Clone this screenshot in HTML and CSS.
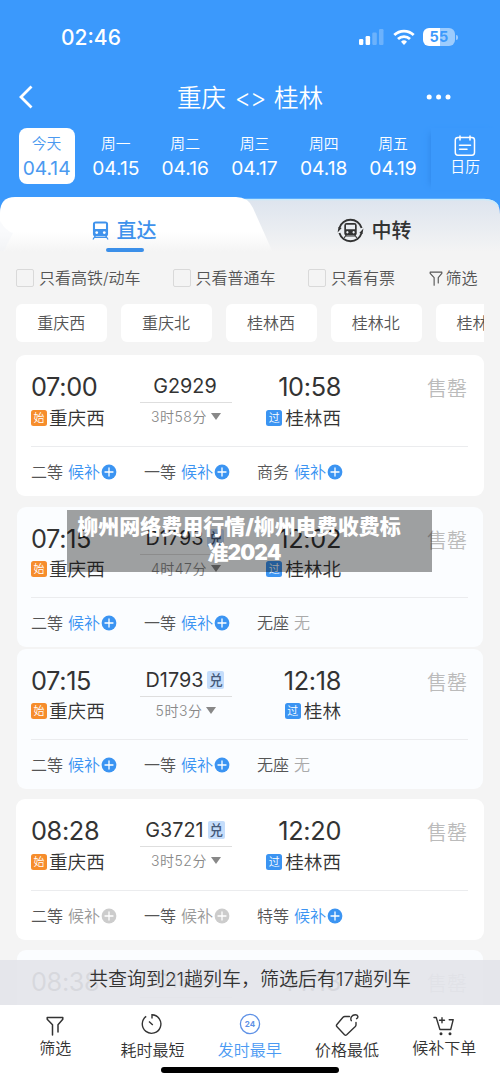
FILE: index.html
```html
<!DOCTYPE html>
<html lang="zh-CN">
<head>
<meta charset="utf-8">
<title>重庆 - 桂林</title>
<link rel="stylesheet" href="styles.css">
</head>
<body>
<svg class="defs" width="0" height="0">
  <symbol id="plus" viewBox="0 0 16 16"><circle cx="8" cy="8" r="7.4" fill="currentColor"/><path d="M8 4v8M4 8h8" stroke="#fff" stroke-width="1.3" stroke-linecap="round"/></symbol>
  <symbol id="train" viewBox="0 0 18 20"><path fill-rule="evenodd" d="M4 .5h10a3 3 0 0 1 3 3V14a2 2 0 0 1-2 2H3a2 2 0 0 1-2-2V3.500a3 3 0 0 1 3-3zM3.200 2.500v5.800h11.600V2.500zM5 10.700a1.500 1.500 0 1 0 .01 0zM13 10.700a1.500 1.500 0 1 0 .01 0z" fill="currentColor"/><path d="M3.500 15.500l-2.500 4M14.500 15.500l2.500 4M3 17.200h12" stroke="currentColor" stroke-width="1.3" fill="none"/></symbol>
  <symbol id="funnel" viewBox="0 0 18 20"><path d="M1.2 1.5h15.6v1.800L12 8.800V16M1.2 1.5v1.800L6.500 8.800V19" fill="none" stroke="currentColor" stroke-width="1.5" stroke-linejoin="round" stroke-linecap="round"/></symbol>
</svg>
<div class="screen">
  <header class="header">
    <div class="status">
      <span class="clock">02:46</span>
      <svg class="signal" width="26" height="18" viewBox="0 0 26 18" fill="#fff"><rect x="1" y="11" width="4.3" height="6" rx="1.2"/><rect x="7.6" y="8" width="4.5" height="9" rx="1.2"/><g opacity=".25"><rect x="14.3" y="4.5" width="4.5" height="12.5" rx="1.2"/><rect x="21" y="1" width="4.5" height="16" rx="1.2"/></g></svg>
      <svg class="wifi" width="22" height="17" viewBox="0 0 22 17" fill="none" stroke="#fff" stroke-width="2.8"><path d="M1.3 6.1a14 14 0 0 1 19.4 0"/><path d="M5 10a8.7 8.7 0 0 1 12 0"/><path d="M11 16l-3-3.2a4.3 4.3 0 0 1 6 0z" fill="#fff" stroke="none"/></svg>
      <span class="battery"><b>5</b><b>5</b></span><i class="battery-tip"></i>
    </div>
    <div class="titlebar">
      <svg width="18" height="24" viewBox="0 0 18 24" fill="none" stroke="#fff" stroke-width="2.8"><path d="M14.5 1.5L4 12l10.5 10.5"/></svg>
      <h1>重庆 <span>&lt;&gt;</span> 桂林</h1>
      <svg width="26" height="6" viewBox="0 0 26 6" fill="#fff"><circle cx="3.2" cy="3" r="2.5"/><circle cx="12.6" cy="3" r="2.5"/><circle cx="22" cy="3" r="2.5"/></svg>
    </div>
    <div class="dates">
      <div class="date on"><span>今天</span><b>04.14</b></div>
      <div class="date"><span>周一</span><b>04.15</b></div>
      <div class="date"><span>周二</span><b>04.16</b></div>
      <div class="date"><span>周三</span><b>04.17</b></div>
      <div class="date"><span>周四</span><b>04.18</b></div>
      <div class="date"><span>周五</span><b>04.19</b></div>
      <div class="calendar">
        <svg width="22" height="22" viewBox="0 0 22 22" fill="none" stroke="#fff" stroke-width="1.5" stroke-linecap="round"><rect x="1.3" y="2.5" width="19.2" height="17.7" rx="2.6"/><path d="M6 1v4M16 1v4M5.5 10.2h11M5.5 14.2h7.5"/></svg>
        <span>日历</span>
      </div>
    </div>
  </header>

  <nav class="tabs">
    <svg class="tabs-bg" width="500" height="58" viewBox="0 0 500 58">
      <defs>
        <linearGradient id="white" x2="0" y2="1"><stop offset=".6" stop-color="#fff"/><stop offset=".95" stop-color="#f4f4f4"/></linearGradient>
        <linearGradient id="grey" x2="0" y2="1"><stop offset="0" stop-color="#dde4ee"/><stop offset=".95" stop-color="#f4f4f4"/></linearGradient>
      </defs>
      <path d="M0 58V17Q0 2 15 2H485Q500 2 500 17V58z" fill="url(#grey)"/>
      <path d="M235 2.5H484Q494 2.5 498 9" fill="none" stroke="#c8ebfc" stroke-width="1.5"/>
      <path d="M0 58V16Q0 0 15 0H236Q248 0 253 11L274 58z" fill="url(#white)"/>
      <path d="M0 24Q6 34 13 36L4 54H0z" fill="#f0f3f8" opacity=".4"/>
    </svg>
    <div class="tab active"><svg class="train" width="17" height="19"><use href="#train"/></svg><span>直达</span></div>
    <div class="tab"><svg class="transfer" width="27" height="27" viewBox="0 0 27 27"><path d="M2.400 11A11.600 11.600 0 0 1 24.600 11M24.600 16A11.600 11.600 0 0 1 2.400 16" fill="none" stroke="#333" stroke-width="1.9"/><path d="M.6 15.500L1.500 10l3.200 1zM26.400 11.500L25.500 17l-3.200-1z" fill="#333"/><svg x="6.500" y="5.500" width="14" height="16" color="#333"><use href="#train"/></svg></svg><span>中转</span></div>
  </nav>

  <div class="filters">
    <label><i></i>只看高铁/动车</label><label><i></i>只看普通车</label><label><i></i>只看有票</label>
    <span class="more"><svg width="14" height="15"><use href="#funnel"/></svg>筛选</span>
  </div>
  <div class="chips"><span>重庆西</span><span>重庆北</span><span>桂林西</span><span>桂林北</span><span>桂林</span></div>

  <main class="list">
    <article class="card">
      <div class="trip">
        <div class="from"><time>07:00</time><p><i class="tag start">始</i>重庆西</p></div>
        <div class="train-no"><b>G2929</b><hr><small>3时58分<i class="caret"></i></small></div>
        <div class="to"><time>10:58</time><p><i class="tag pass">过</i>桂林西</p></div>
        <div class="sold">售罄</div>
      </div>
      <div class="seats"><span>二等 <em>候补<svg><use href="#plus"/></svg></em></span><span>一等 <em>候补<svg><use href="#plus"/></svg></em></span><span>商务 <em>候补<svg><use href="#plus"/></svg></em></span></div>
    </article>

    <article class="card tinted second">
      <div class="trip">
        <div class="from"><time>07:15</time><p><i class="tag start">始</i>重庆西</p></div>
        <div class="train-no"><b>D1793<i class="swap">兑</i></b><hr><small>4时47分<i class="caret"></i></small></div>
        <div class="to"><time>12:02</time><p><i class="tag pass">过</i>桂林北</p></div>
        <div class="sold">售罄</div>
      </div>
      <div class="seats"><span>二等 <em>候补<svg><use href="#plus"/></svg></em></span><span>一等 <em>候补<svg><use href="#plus"/></svg></em></span><span>无座 <em class="none">无</em></span></div>
      <div class="caption"><span>柳州网络费用行情/柳州电费收费标</span><span>准2024</span></div>
    </article>

    <article class="card tinted third">
      <div class="trip">
        <div class="from"><time>07:15</time><p><i class="tag start">始</i>重庆西</p></div>
        <div class="train-no"><b>D1793<i class="swap">兑</i></b><hr><small>5时3分<i class="caret"></i></small></div>
        <div class="to"><time>12:18</time><p><i class="tag pass">过</i>桂林</p></div>
        <div class="sold">售罄</div>
      </div>
      <div class="seats"><span>二等 <em>候补<svg><use href="#plus"/></svg></em></span><span>一等 <em>候补<svg><use href="#plus"/></svg></em></span><span>无座 <em class="none">无</em></span></div>
    </article>

    <article class="card fourth">
      <div class="trip">
        <div class="from"><time>08:28</time><p><i class="tag start">始</i>重庆西</p></div>
        <div class="train-no"><b>G3721<i class="swap">兑</i></b><hr><small>3时52分<i class="caret"></i></small></div>
        <div class="to"><time>12:20</time><p><i class="tag pass">过</i>桂林西</p></div>
        <div class="sold">售罄</div>
      </div>
      <div class="seats"><span>二等 <em class="off">候补<svg><use href="#plus"/></svg></em></span><span>一等 <em class="off">候补<svg><use href="#plus"/></svg></em></span><span>特等 <em>候补<svg><use href="#plus"/></svg></em></span></div>
    </article>

    <article class="card tinted fifth">
      <div class="trip">
        <div class="from"><time>08:38</time></div>
        <div class="train-no"><b>D1823</b><hr></div>
        <div class="to"><time>14:13</time></div>
        <div class="sold">售罄</div>
      </div>
      <div class="toast">共查询到21趟列车，筛选后有17趟列车</div>
    </article>
  </main>

  <footer class="bottom">
    <div class="item edge"><svg width="18" height="20"><use href="#funnel"/></svg><span>筛选</span></div>
    <div class="item"><svg width="22" height="22" viewBox="0 0 22 22" fill="none" stroke="#333" stroke-width="1.4"><path d="M5.200 3.400A9.300 9.300 0 1 0 11 1.700V5.500M8 8.500l3.800 3.500"/></svg><span>耗时最短</span></div>
    <div class="item current"><svg width="22" height="22" viewBox="0 0 22 22"><circle cx="11" cy="11" r="9.6" fill="none" stroke="#5e91e6" stroke-width="1.3"/><text x="11" y="14" text-anchor="middle">24</text></svg><span>发时最早</span></div>
    <div class="item"><svg width="24" height="24" viewBox="0 0 24 24" fill="none" stroke="#333" stroke-width="1.4" stroke-linejoin="round" stroke-linecap="round"><path d="M14.500 3.500H9.800Q8.800 3.500 8 4.300L1.900 11.500q-1 1.200.1 2.300l7.500 7.900q1.100 1 2.200 0l8.600-8.200q.7-.7.7-1.700V9.500"/><path d="M16.300 7.700c-1.400-2.600.7-6 4-6 2.800 0 3.400 2.800 1.300 4"/></svg><span>价格最低</span></div>
    <div class="item edge"><svg width="22" height="20" viewBox="0 0 22 20" fill="none" stroke="#333" stroke-width="1.4" stroke-linecap="round" stroke-linejoin="round"><path d="M1 1.5h2.200l3.700 12h10.800l2.500-9.800h-4M9 1.700v5M6.500 4.200h5"/><circle cx="8" cy="17.800" r=".8" fill="#333"/><circle cx="17" cy="17.800" r=".8" fill="#333"/></svg><span>候补下单</span></div>
    <i class="home"></i>
  </footer>
</div>
</body>
</html>
```
FILE: styles.css
```css
* { box-sizing: border-box; margin: 0; padding: 0; }
body { background: #f4f4f4; font-family: Inter, "Noto Sans CJK SC", sans-serif; color: #333; }
i, em { font-style: normal; }
span, b, p, time, h1, label, .sold { white-space: nowrap; }
.defs { position: absolute; }
.screen { width: 500px; height: 1083px; overflow: hidden; display: flex; flex-direction: column; background: #f4f4f4; }

.header { height: 197px; flex: none; background: #3b99fc; color: #fff; }
.status { height: 74px; display: flex; align-items: center; padding-left: 61px; }
.clock { width: 297px; padding-top: 2px; font-size: 21px; font-weight: 500; line-height: 26px; }
.wifi { margin-left: 9px; }
.battery { width: 32px; height: 18px; margin-left: 8px; border-radius: 6px; display: flex; justify-content: center; background: linear-gradient(90deg, #fff 17px, #9dccfd 17px); color: #3b99fc; font-size: 14.5px; line-height: 18px; }
.battery b { font-weight: 700; width: 9.5px; text-align: center; }
.battery-tip { width: 2px; height: 5px; margin-left: 1px; border-radius: 0 2px 2px 0; background: #9dccfd; }
.titlebar { height: 46px; display: flex; align-items: center; padding: 0 0 0 17px; }
.titlebar h1 { font-size: 24.5px; font-weight: 350; line-height: 36px; width: 146px; padding-top: 1px; display: flex; justify-content: space-between; }
.titlebar h1 span { font-size: 25px; font-weight: 300; letter-spacing: -1px; line-height: 36px; }
.titlebar > svg:first-child { margin-right: 142px; }
.titlebar h1 + svg { margin-left: 103px; }
.dates { display: flex; padding: 8px 0 0 12px; }
.date { width: 69.3px; height: 56px; display: flex; flex-direction: column; align-items: center; padding: 5px 0 0; }
.date span, .calendar span { font-size: 14.8px; font-weight: 350; line-height: 22px; }
.date b { font-size: 19.2px; font-weight: 400; line-height: 26px; }
.date.on { width: 56px; margin: 0 6.600px; border-radius: 8px; background: #fff; color: #4b9af0; }
.calendar { width: 69px; height: 62px; margin-left: 3px; padding: 7px 0 0; display: flex; flex-direction: column; align-items: center; box-shadow: -6px 0 6px -5px #3189ea; }
.calendar svg { flex: none; }
.calendar span { line-height: 21px; }

.tabs { height: 58px; flex: none; position: relative; display: flex; background: linear-gradient(#3b99fc 30px, #f4f4f4 30px); }
.tabs-bg { position: absolute; top: 0; left: 0; }
.tab { position: relative; width: 250px; height: 58px; display: flex; align-items: center; justify-content: center; padding: 9px 2px 0 0; font-size: 20px; font-weight: 500; line-height: 30px; }
.tab.active { color: #3f92ec; }
.tab.active::after { content: ""; position: absolute; left: 106px; top: 51px; width: 38px; height: 4px; border-radius: 2px; background: #3b8fe9; }
.train { margin-right: 8px; }
.transfer { margin-right: 8px; }

.filters { height: 44px; flex: none; display: flex; align-items: center; padding: 2px 0 0 16px; font-size: 16px; font-weight: 350; color: #555; }
.filters label { display: flex; align-items: center; width: 156.5px; line-height: 24px; }
.filters label:nth-child(2) { width: 135.5px; }
.filters label:nth-child(3) { width: 120.5px; }
.filters label i { width: 18px; height: 18px; margin-right: 5px; border: 1px solid #d9d9d9; border-radius: 2px; }
.more { display: flex; align-items: center; gap: 3px; line-height: 24px; }
.chips { width: 468px; height: 38px; flex: none; margin: 5px 0 0 16px; display: flex; gap: 13.5px; overflow: hidden; }
.chips span { width: 91.4px; flex: none; border-radius: 6px; background: #fff; font-size: 16px; font-weight: 350; line-height: 38px; padding-right: 1px; text-align: center; color: #555; }
.chips span:last-child { text-align: left; padding-left: 21px; }

.list { flex: none; height: 663px; padding: 13px 16px 0; }
.card { position: relative; height: 141px; border-radius: 9px; background: #fff; padding: 0 16px 0 15px; }
.tinted { height: 140px; background: #fbfdff; margin-left: 1px; margin-right: 1px; padding: 0 15px 0 14px; }
.second { margin-top: 11px; }
.third { margin-top: 2px; }
.fourth { margin-top: 10px; }
.fifth { height: 55px; margin-top: 10px; border-radius: 9px 9px 0 0; }
.trip { height: 92px; display: grid; grid-template-columns: 109px 92px 109px 1fr; border-bottom: 1px solid #ebecee; }
.tinted .trip { height: 91px; }
.fifth .trip { border: 0; height: 55px; overflow: hidden; opacity: .6; }
time { display: block; height: 32px; margin-top: 16px; font-size: 25.3px; line-height: 32px; letter-spacing: -.35px; }
.trip p { display: flex; align-items: center; gap: 3px; height: 28px; margin-top: 1px; font-size: 18.6px; font-weight: 350; line-height: 28px; }
.from p { gap: 2px; }
.tinted .trip p { margin-top: 0; }
.to { display: flex; flex-direction: column; align-items: flex-end; }
.tag { width: 16px; height: 16px; border-radius: 2.5px; color: #fff; font-size: 11px; line-height: 16px; text-align: center; }
.start { background: #f68d2c; }
.pass { background: #3b94f2; }
.train-no { display: flex; flex-direction: column; align-items: center; padding-top: 17px; }
.train-no b { display: flex; align-items: center; height: 28px; padding-right: 2px; font-size: 19.8px; font-weight: 400; line-height: 28px; }
.swap { width: 17px; height: 18px; margin-left: 4px; border-radius: 2px; background: #c5ddfb; color: #44597a; font-size: 13.5px; font-weight: 500; line-height: 18px; text-align: center; }
.train-no hr { width: 92px; height: 1px; margin-top: 2px; border: 0; background: #dedede; }
.train-no small { display: flex; align-items: center; height: 28px; margin-top: -1px; font-size: 14px; font-weight: 350; letter-spacing: .5px; color: #888; }
.caret { margin-left: 4px; border: 5.5px solid transparent; border-top: 7px solid #888; border-bottom: 0; }
.sold { margin-top: 18px; padding: 1px 1px 0 0; font-size: 20px; font-weight: 350; line-height: 30px; text-align: right; color: #bbb; }
.seats { display: grid; grid-template-columns: repeat(3, 113px); height: 49px; align-items: center; font-size: 16px; font-weight: 350; color: #555; }
.seats span { display: flex; align-items: center; gap: 5px; line-height: 24px; }
.seats em { display: flex; align-items: center; color: #3b94f2; }
.seats em svg { width: 16px; height: 16px; margin-left: 1px; }
.seats .off { color: #999; }
.seats .off svg { color: #ccc; }
.seats .none { color: #aaa; }
.caption { position: absolute; left: 50px; top: 3px; width: 365px; height: 62px; padding-top: 4px; background: rgba(0, 0, 0, .37); color: #fff; font-size: 21px; font-weight: 900; line-height: 26px; text-align: center; }
.caption span { display: block; padding-right: 21px; }
.caption span + span { padding-right: 11px; letter-spacing: -.9px; }
.toast { position: absolute; left: -17px; top: 10px; width: 500px; height: 46px; background: rgba(227, 228, 233, .88); font-size: 19px; font-weight: 350; line-height: 40px; text-align: center; white-space: nowrap; }

.bottom { position: relative; flex: 1; background: #fff; display: flex; padding-left: 6.5px; color: #333; }
.item { width: 97.3px; display: flex; flex-direction: column; align-items: center; font-size: 16px; line-height: 24px; }
.item svg { flex: none; margin-top: 8px; }
.item span { margin-top: auto; margin-bottom: 22px; font-weight: 350; }
.item.edge span { margin-bottom: 24px; }
.item.edge svg { margin-top: 11px; }
.current { color: #4b9af3; }
.current text { font-size: 8px; font-weight: 700; fill: #5e91e6; }
.home { position: absolute; left: 161px; bottom: 11px; width: 178px; height: 6px; border-radius: 3px; background: #000; }
```
